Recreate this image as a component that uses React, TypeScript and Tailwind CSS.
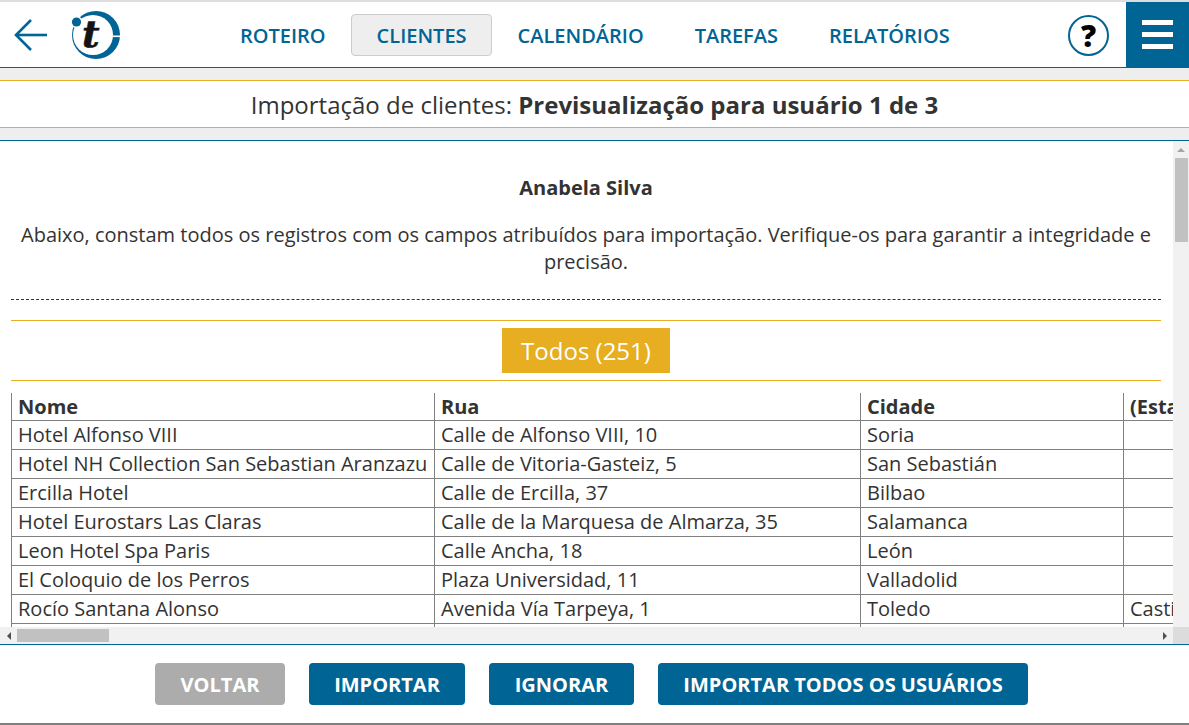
import React from 'react';

const NAV = [
  { label: 'ROTEIRO' },
  { label: 'CLIENTES', active: true },
  { label: 'CALENDÁRIO' },
  { label: 'TAREFAS' },
  { label: 'RELATÓRIOS' },
];

const ROWS = [
  ['Hotel Alfonso VIII', 'Calle de Alfonso VIII, 10', 'Soria', ''],
  ['Hotel NH Collection San Sebastian Aranzazu', 'Calle de Vitoria-Gasteiz, 5', 'San Sebastián', ''],
  ['Ercilla Hotel', 'Calle de Ercilla, 37', 'Bilbao', ''],
  ['Hotel Eurostars Las Claras', 'Calle de la Marquesa de Almarza, 35', 'Salamanca', ''],
  ['Leon Hotel Spa Paris', 'Calle Ancha, 18', 'León', ''],
  ['El Coloquio de los Perros', 'Plaza Universidad, 11', 'Valladolid', ''],
  ['Rocío Santana Alonso', 'Avenida Vía Tarpeya, 1', 'Toledo', 'Castilla-La Mancha'],
  ['', '', '', ''],
];

const BackArrow = () => (
  <svg width="34" height="32" viewBox="0 0 34 32" fill="none" stroke="#006494" strokeWidth="2.6">
    <path d="M 33 16 L 2 16" />
    <path d="M 17 1 L 2 16 L 17 31" />
  </svg>
);

const Logo = () => (
  <svg width="50" height="50" viewBox="0 0 50 50">
    {/* crescent ring, thin on the left and heavy on the right */}
    <circle cx="25" cy="25" r="24" fill="#006494" />
    <circle cx="22" cy="25" r="20" fill="white" />
    <rect x="39" y="25.5" width="11" height="1.6" fill="white" />
    <circle cx="5.5" cy="12" r="6" fill="white" />
    <circle cx="5.5" cy="12" r="4.6" fill="#006494" />
    <text x="11" y="37" fontFamily="'DejaVu Serif', serif" fontWeight="700" fontStyle="italic" fontSize="38" fill="#141414" stroke="#141414" strokeWidth="0.6">t</text>
  </svg>
);

const HelpIcon = () => (
  <div className="w-[41px] h-[41px] rounded-full border-[2px] border-[#006494] flex items-center justify-center font-['Open_Sans',sans-serif] font-extrabold text-[30px] leading-none text-black">
    ?
  </div>
);

const App: React.FC = () => {
  return (
    <div className="w-[1189px] h-[725px] bg-white overflow-hidden flex flex-col font-['Open_Sans',sans-serif] text-[#333333]">
      {/* Top bar */}
      <header className="h-[68px] shrink-0 border-t-2 border-t-[#dddddd] border-b border-b-[#006494] flex items-center">
        <div className="ml-[14px] mt-[1px]">
          <BackArrow />
        </div>
        <div className="ml-[23px] mt-[1px]">
          <Logo />
        </div>
        <nav className="flex items-center gap-[1px] ml-[94px] mt-[1px]">
          {NAV.map((n) => (
            <a
              key={n.label}
              className={
                n.active
                  ? 'h-[42px] flex items-center -ml-[1px] pl-[25px] pr-[24px] pt-[1px] rounded-[4px] border border-[#cccccc] bg-[#eeeeee] text-[#006494] text-[20px] font-semibold'
                  : 'h-[42px] flex items-center px-[25px] pt-[1px] text-[#006494] text-[20px] font-semibold'
              }
            >
              {n.label}
            </a>
          ))}
        </nav>
        <div className="ml-auto mr-[17px] mt-[2px]">
          <HelpIcon />
        </div>
        <button className="w-[63px] h-[65px] bg-[#006494] flex flex-col items-center justify-center gap-[7px]">
          <span className="w-[31px] h-[5px] bg-white" />
          <span className="w-[31px] h-[5px] bg-white" />
          <span className="w-[31px] h-[5px] bg-white" />
        </button>
      </header>

      <div className="h-[12px] shrink-0 bg-[#eeeeee]" />

      {/* Title */}
      <div className="h-[48px] shrink-0 border-y border-[#e6ae20] flex items-center justify-center text-[24px] pt-[2px]">
        <span>Importação de clientes:&nbsp;</span>
        <span className="font-bold">Previsualização para usuário 1 de 3</span>
      </div>

      <div className="h-[12px] shrink-0 bg-[#eeeeee]" />

      {/* Scrolling body */}
      <div className="h-[505px] shrink-0 border-y border-[#006494] flex flex-col">
        <div className="flex-1 min-h-0 flex">
          <main className="w-[1173px] overflow-hidden pl-[11px] pr-[12px]">
            <h2 className="mt-[34px] text-center font-bold text-[20px] leading-[26px]">Anabela Silva</h2>
            <p className="mt-[20px] text-center text-[20px] leading-[27px]">
              Abaixo, constam todos os registros com os campos atribuídos para importação. Verifique-os para garantir a integridade e precisão.
            </p>
            <div className="mt-[24px] border-t border-dashed border-[#333333]" />
            <div className="mt-[20px] border-y border-[#e6ae20] h-[61px] flex items-center justify-center">
              <span className="w-[168px] h-[45px] bg-[#e6ae20] text-white text-[24px] flex items-center justify-center">
                Todos (251)
              </span>
            </div>
            <table className="mt-[12px] border-collapse table-fixed w-[1301px] text-[20px] leading-[28px]">
              <colgroup>
                <col className="w-[423px]" />
                <col className="w-[426px]" />
                <col className="w-[263px]" />
                <col />
              </colgroup>
              <thead>
                <tr>
                  {['Nome', 'Rua', 'Cidade', '(Estado)'].map((h) => (
                    <th key={h} className="h-[27px] border-x border-b border-[#808080] text-left font-bold leading-[25px] pt-[1px] pb-0 px-[6px] whitespace-nowrap">
                      {h}
                    </th>
                  ))}
                </tr>
              </thead>
              <tbody>
                {ROWS.map((row, i) => (
                  <tr key={i} className="h-[29px]">
                    {row.map((c, j) => (
                      <td key={j} className="border border-[#808080] px-[6px] py-0 whitespace-nowrap">
                        {c}
                      </td>
                    ))}
                  </tr>
                ))}
              </tbody>
            </table>
          </main>
          {/* Vertical scrollbar */}
          <div className="w-[16px] bg-[#f1f1f1] flex flex-col items-center">
            <div className="h-[17px] flex items-center justify-center">
              <div className="w-0 h-0 border-x-[4px] border-x-transparent border-b-[4px] border-b-[#a3a3a3]" />
            </div>
            <div className="w-[13px] h-[84px] bg-[#c1c1c1]" />
          </div>
        </div>
        {/* Horizontal scrollbar */}
        <div className="h-[17px] shrink-0 flex">
          <div className="flex-1 bg-[#f1f1f1] flex items-center">
            <div className="w-[17px] flex justify-center">
              <div className="w-0 h-0 border-y-[4px] border-y-transparent border-r-[4px] border-r-[#505050]" />
            </div>
            <div className="w-[92px] h-[13px] bg-[#c1c1c1]" />
            <div className="ml-auto w-[17px] flex justify-center">
              <div className="w-0 h-0 border-y-[4px] border-y-transparent border-l-[4px] border-l-[#505050]" />
            </div>
          </div>
          <div className="w-[16px] bg-[#dcdcdc]" />
        </div>
      </div>

      {/* Footer */}
      <footer className="flex-1 border-b-2 border-b-[#808080] pr-[6px] flex items-center justify-center gap-[24px] text-white text-[20px] font-bold">
        <button className="w-[130px] h-[42px] pt-[1px] rounded-[4px] bg-[#acacac]">VOLTAR</button>
        <button className="w-[156px] h-[42px] pt-[1px] rounded-[4px] bg-[#006494]">IMPORTAR</button>
        <button className="w-[145px] h-[42px] pt-[1px] rounded-[4px] bg-[#006494]">IGNORAR</button>
        <button className="w-[370px] h-[42px] pt-[1px] rounded-[4px] bg-[#006494]">IMPORTAR TODOS OS USUÁRIOS</button>
      </footer>
    </div>
  );
};

export default App;
